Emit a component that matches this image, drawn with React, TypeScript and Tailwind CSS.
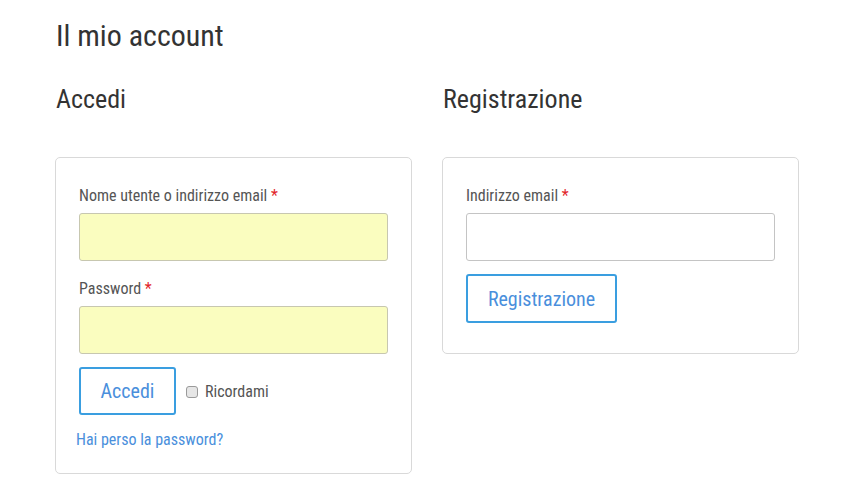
import { useState } from "react";

const font = "font-['Roboto_Condensed','Liberation_Sans_Narrow',Roboto,sans-serif]";

function Label({ text }: { text: string }) {
  return (
    <label className="block text-[16px] leading-[20px] text-[#555] mb-[7px]">
      {text} <span className="text-[#e2262b]">*</span>
    </label>
  );
}

export default function App() {
  const [remember, setRemember] = useState(false);

  return (
    <div className={`min-h-screen bg-white text-[#333] ${font} pl-[56px] pt-[16px]`}>
      <h1 className="text-[30px] leading-[40px] text-[#333]">Il mio account</h1>

      <div className="flex gap-[31px] w-[743px] mt-[28px]">
        <div className="w-[356px]">
          <h2 className="text-[26px] leading-[30px] text-[#333]">Accedi</h2>
          <div className="mt-[43px] -ml-px border border-[#d9d9d9] rounded-[5px] px-[23px] pt-[28px] pb-[23px]">
            <Label text="Nome utente o indirizzo email" />
            <input
              type="text"
              className="block w-full h-[48px] rounded-[3px] border border-[#c7c7b0] bg-[#fafdbf]"
            />
            <div className="mt-[18px]">
              <Label text="Password" />
            </div>
            <input
              type="password"
              className="block w-full h-[48px] rounded-[3px] border border-[#c7c7b0] bg-[#fafdbf]"
            />
            <div className="flex items-center mt-[13px]">
              <button
                type="button"
                className="w-[97px] h-[48px] border-2 border-[#3a9ee0] rounded-[3px] text-[20px] text-[#4a8fdc] bg-white"
              >
                Accedi
              </button>
              <label className="flex items-center ml-[10px] mt-[2px] text-[16px] text-[#555]">
                <input
                  type="checkbox"
                  checked={remember}
                  onChange={(e) => setRemember(e.target.checked)}
                  className="appearance-none w-[12px] h-[12px] mr-[7px] rounded-[3px] border border-[#9a9a9a] bg-[#e6e6e6] checked:bg-[#9a9a9a]"
                />
                Ricordami
              </label>
            </div>
            <a href="#" className="block mt-[15px] -ml-[3px] text-[16px] leading-[20px] text-[#4a8fdc]">
              Hai perso la password?
            </a>
          </div>
        </div>

        <div className="w-[356px]">
          <h2 className="text-[26px] leading-[30px] text-[#333]">Registrazione</h2>
          <div className="mt-[43px] -ml-px border border-[#d9d9d9] rounded-[5px] px-[23px] pt-[28px] pb-[30px]">
            <Label text="Indirizzo email" />
            <input
              type="email"
              className="block w-full h-[48px] rounded-[3px] border border-[#c4c4c4] bg-white"
            />
            <button
              type="button"
              className="mt-[13px] w-[151px] h-[49px] border-2 border-[#3a9ee0] rounded-[3px] text-[20px] text-[#4a8fdc] bg-white"
            >
              Registrazione
            </button>
          </div>
        </div>
      </div>
    </div>
  );
}
